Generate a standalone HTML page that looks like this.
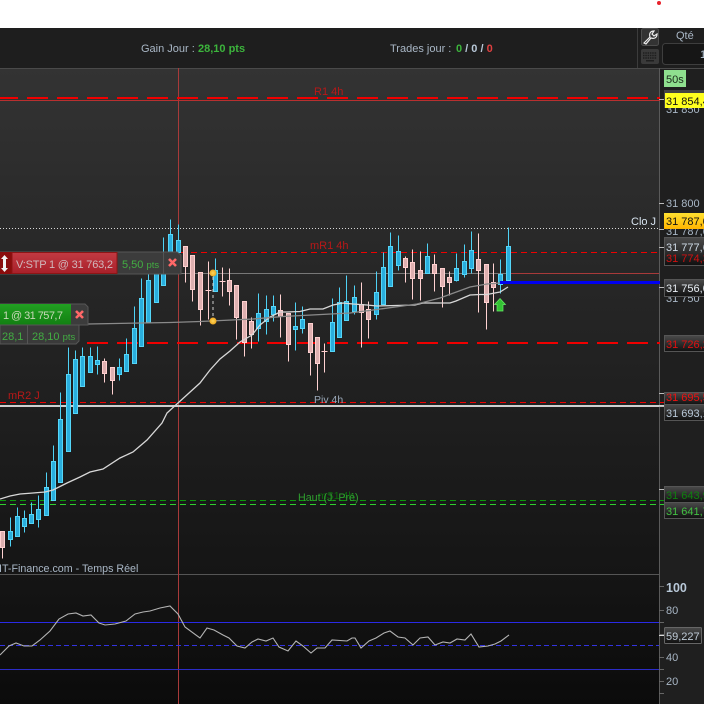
<!DOCTYPE html>
<html><head><meta charset="utf-8"><style>
html,body{margin:0;padding:0;width:704px;height:704px;overflow:hidden;background:#fff}
svg{display:block;font-family:"Liberation Sans",sans-serif}
</style></head><body>
<svg width="704" height="704" viewBox="0 0 704 704" xmlns="http://www.w3.org/2000/svg">
<defs>
<linearGradient id="c" x1="0" y1="0" x2="0" y2="1"><stop offset="0" stop-color="#333"/><stop offset="1" stop-color="#151515"/></linearGradient>
<linearGradient id="r" x1="0" y1="0" x2="0" y2="1"><stop offset="0" stop-color="#151515"/><stop offset="1" stop-color="#0b0b0b"/></linearGradient>
<linearGradient id="b" x1="0" y1="0" x2="0" y2="1"><stop offset="0" stop-color="#4a4a4a"/><stop offset="1" stop-color="#101010"/></linearGradient>
<linearGradient id="y" x1="0" y1="0" x2="0" y2="1"><stop offset="0" stop-color="#ffe030"/><stop offset="1" stop-color="#ffb400"/></linearGradient>
<linearGradient id="l" x1="0" y1="0" x2="0" y2="1"><stop offset="0" stop-color="#c23a42"/><stop offset="1" stop-color="#a8202a"/></linearGradient>
<linearGradient id="g" x1="0" y1="0" x2="0" y2="1"><stop offset="0" stop-color="#22a022"/><stop offset="1" stop-color="#127f12"/></linearGradient>
<radialGradient id="d"><stop offset="0" stop-color="#ffd75a"/><stop offset="1" stop-color="#eda820"/></radialGradient>
</defs>
<rect width="704" height="28" fill="#fff"/>
<circle cx="659" cy="3" r="2" fill="#e8222c"/>
<rect y="28" width="704" height="40" fill="#1e1e1e"/>
<rect y="68" width="660" height="506" fill="url(#c)"/>
<rect x="660" y="68" width="44" height="636" fill="#1f1f1f"/>
<rect y="575" width="659" height="129" fill="url(#r)"/>
<rect y="68" width="704" height="1" fill="#4a4a4a"/>
<rect y="574" width="659" height="1" fill="#555"/>
<rect x="637" y="28" width="1" height="40" fill="#3c3c3c"/>
<rect x="659" y="68" width="1" height="636" fill="#5a5a5a"/>
<rect x="178" y="68" width="1" height="636" fill="#a83a3a"/>

<text x="141" y="52" font-size="11" fill="#a9b7c6">Gain Jour :</text>
<text x="198" y="52" font-size="11" font-weight="bold" fill="#3cb43c">28,10 pts</text>
<text x="390" y="52" font-size="11" fill="#a9b7c6">Trades jour :</text>
<text x="456" y="52" font-size="11" font-weight="bold" fill="#3cb43c">0<tspan fill="#b8c8d8"> / 0 / </tspan><tspan fill="#e04040">0</tspan></text>

<rect x="641.5" y="28.5" width="17" height="17" rx="2" fill="#333" stroke="#4d4d4d"/>
<path d="M644 43l6-6c-1-3 0-6 4-6l-2 3 2 2 3-2c0 4-3 5-6 4l-5 6z" fill="none" stroke="#eee" stroke-width="1.2"/>
<rect x="641" y="49" width="18" height="15" rx="2" fill="#3a3a3a"/>
<path d="M643 53h14M643 55.500h14M643 58h14" stroke="#1e1e1e" stroke-width="1.500" stroke-dasharray="1.500 .8"/>
<rect x="646" y="60" width="8" height="1.500" fill="#1e1e1e"/>
<text x="676" y="39" font-size="11" fill="#a9b7c6">Qté</text>
<rect x="662.500" y="43.500" width="50" height="21" rx="3" fill="#161616" stroke="#3e3e3e"/>
<text x="700" y="58" font-size="11" fill="#b8c8d8">1</text>

<g fill="none">
<rect y="100" width="660" height="1" fill="#b83030"/>
<path d="M-3 98H660" stroke="#f00000" stroke-width="2" stroke-dasharray="21 9"/>
<path d="M0 228.500H660" stroke="#d8d8d8" stroke-dasharray="1 2"/>
<path d="M181 252.500H660" stroke="#f00000" stroke-dasharray="6 4"/>
<path d="M180 273.500H510" stroke="#777"/>
<path d="M510 273.500H659" stroke="#a83a3a"/>
<path d="M87 343H660" stroke="#f00000" stroke-width="2" stroke-dasharray="21 9"/>
<path d="M0 402.500H664" stroke="#f00000" stroke-dasharray="6 4"/>
<rect y="405" width="664" height="2" fill="#cfcfcf"/>
<path d="M0 500.500H664" stroke="#0a9a0a" stroke-dasharray="6 4"/>
<path d="M0 504.500H664" stroke="#2fd02f" stroke-dasharray="6 4"/>
</g>

<text x="314" y="95" font-size="11" fill="#b81818">R1 4h</text>
<text x="310" y="249" font-size="11" fill="#b81818">mR1 4h</text>
<text x="8" y="399" font-size="11" fill="#b81818">mR2 J</text>
<text x="314" y="403" font-size="10.500" fill="#9aa8b8">Piv 4h</text>
<text x="318" y="499" font-size="10.500" fill="#0c6a0c">mS1 4h</text>
<text x="298" y="501" font-size="10.700" fill="#2fa02f">Haut (J. Pré)</text>
<text x="631" y="225" font-size="11" fill="#d8e4f0">Clo J</text>
<text x="-1" y="572" font-size="10.700" fill="#a9b7c6">IT-Finance.com - Temps Réel</text>

<g transform="translate(.5 .5)" fill="none">
<path stroke="#4fd2f5" d="M10 517V546M17 507V536M24 510V532M31 502V523M38 495V527M46 472V515M53 445V500M60 392V482M68 347V451M75 350V413M82 347V386M90 347V372M97 346V374M119 358V380M126 338V371M134 306V363M141 278V346M148 274V322M156 260V302M163 237V285M170 219V272M178 224V252M215 258V291M258 293V341M266 295V334M273 295V321M295 302V350M302 306V333M332 298V351M339 287V337M346 275V320M354 285V314M376 271V319M383 252V304M390 232V286M398 235V270M427 243V273M456 253V281M464 244V277M471 231V273M500 259V293M508 227V280"/>
<path stroke="#ffd2d2" d="M2 531V558M104 358V382M112 367V394M185 246V282M192 255V301M200 272V325M208 261V319M222 267V296M229 268V305M236 285V339M244 301V356M251 317V348M280 294V337M288 313V361M310 323V375M317 337V390M324 343V372M361 282V347M368 301V338M405 256V282M412 249V299M420 251V300M434 254V291M442 268V307M449 271V295M478 233V312M486 264V329M493 263V311"/>
<path fill="#2aaedd" stroke="#55d6f8" d="M8 531h4V539h-4zM15 516h4V536h-4zM22 518h4V526h-4zM29 514h4V523h-4zM36 509h4V519h-4zM44 487h4V515h-4zM51 461h4V500h-4zM58 419h4V482h-4zM66 374h4V451h-4zM73 359h4V413h-4zM80 356h4V386h-4zM88 356h4V372h-4zM95 360h4V364h-4zM117 367h4V374h-4zM124 354h4V371h-4zM132 328h4V363h-4zM139 298h4V346h-4zM146 280h4V322h-4zM154 272h4V302h-4zM161 254h4V285h-4zM168 234h4V270h-4zM176 240h4V252h-4zM213 270h4V291h-4zM256 313h4V328h-4zM264 309h4V321h-4zM271 306h4V314h-4zM293 326h4V329h-4zM300 319h4V328h-4zM330 322h4V351h-4zM337 302h4V337h-4zM344 301h4V320h-4zM352 297h4V311h-4zM374 292h4V314h-4zM381 267h4V304h-4zM388 246h4V286h-4zM396 251h4V265h-4zM425 256h4V273h-4zM454 268h4V280h-4zM462 261h4V274h-4zM469 250h4V268h-4zM498 274h4V284h-4zM506 246h4V280h-4z"/>
<path fill="#deb0b0" stroke="#ffd0d0" d="M0 531h4V547h-4zM102 361h4V373h-4zM110 367h4V380h-4zM183 246h4V266h-4zM190 255h4V289h-4zM198 272h4V309h-4zM205 290h6zM219 281h6zM227 280h4V291h-4zM234 285h4V317h-4zM242 301h4V342h-4zM249 321h4V334h-4zM278 310h4V316h-4zM286 313h4V344h-4zM308 323h4V352h-4zM315 337h4V363h-4zM321 351h6zM359 304h4V312h-4zM366 309h4V319h-4zM403 258h4V267h-4zM410 262h4V278h-4zM418 270h4V278h-4zM432 264h4V273h-4zM440 268h4V286h-4zM447 277h4V282h-4zM476 259h4V270h-4zM484 264h4V302h-4zM491 282h4V287h-4z"/>
</g>

<path fill="none" stroke="#d8d8d8" stroke-width="1.300" d="M0 499L10 496L20 494L33 493L45 492L53 490L67 483L80 477L90 472L103 469L120 458L133 452L147 440L162 423L167 413L178 403L200 383L210 370L220 359L230 351L240 342L252 335L260 325L270 317L280 312L287 312L300 311.500L310 309L323 309L333 305L343 303L353 304L360 304.500L367 305L377 306L415 305L423 303L450 303L456 301L470 295L480 294.500L487 294.500L500 292L508 287"/>
<path fill="none" stroke="#8a8a8a" stroke-width="1.300" d="M88 324L170 322.500L200 321.500L253 319L283 316.500L350 313L373 310L417 304L440 298L470 287L487 284L500 283"/>
<path d="M213 277V318" stroke="#cfcfcf" stroke-dasharray="3 3"/>
<circle cx="213" cy="273" r="3.500" fill="url(#d)"/>
<circle cx="213" cy="321" r="3.500" fill="url(#d)"/>
<rect x="500" y="281" width="160" height="3" fill="#0000f0"/>
<path d="M500 298.500L505.500 304.500H503V311H497V304.500H494.500Z" fill="#33c233" stroke="#66ee66" stroke-width=".7"/>

<!-- Order labels -->
<path d="M0 252H177l4 3V274H0Z" fill="#3c3c3c" stroke="#565656" stroke-width="1"/>
<rect x="0" y="252" width="12" height="22" fill="#8a0c0c"/>
<rect x="12" y="252.500" width="105" height="21" fill="url(#l)" stroke="#8c1515"/>
<rect x="163" y="252" width="1" height="22" fill="#555"/>
<path d="M4.500 255L8 259H6V268H8L4.500 272L1 268H3V259H1Z" fill="#f2f2f2"/>
<text x="16" y="268" font-size="11" fill="#d0b8bc" textLength="97">V:STP 1 @ 31 763,2</text>
<text x="122" y="268" font-size="11" fill="#42ad42">5,50 <tspan font-size="9.500">pts</tspan></text>
<path d="M169 259l7 7m0-7l-7 7" stroke="#ff6868" stroke-width="2.600"/>

<path d="M0 304H85l3 3V325H0Z" fill="#3c3c3c" stroke="#565656"/>
<rect x="0" y="304" width="71" height="21" fill="url(#g)"/>
<text x="3" y="319" font-size="11" fill="#c8d8b8" textLength="60">1 @ 31 757,7</text>
<path d="M76 311l7 7m0-7l-7 7" stroke="#ff6868" stroke-width="2.600"/>
<path d="M0 325H79V341l-3 3H0Z" fill="#3a3a3a" stroke="#565656"/>
<rect x="27" y="325" width="1" height="19" fill="#555"/>
<text x="2" y="340" font-size="11" fill="#42ad42">28,1</text>
<text x="32" y="340" font-size="11" fill="#42ad42">28,10 <tspan font-size="9.500">pts</tspan></text>

<!-- Axis -->
<path d="M659 99.500h5M659 203.500h5M659 229.500h5M659 247.500h5M659 287.500h5M659 393.500h5M659 406.500h5M659 489.500h5" stroke="#bbb"/>
<rect x="664" y="70" width="22" height="17" fill="#8fe08f"/>
<text x="666" y="83" font-size="11" fill="#1a2a1a">50s</text>
<g font-size="11" fill="#a9b7c6">
<text x="666" y="113">31 850</text>
<text x="666" y="207">31 800</text>
<text x="666" y="235">31 787,0</text>
<text x="666" y="302">31 750</text>
<text x="666" y="494" fill="#8898a8">31 650</text>
</g>
<rect x="664" y="90" width="41" height="18" fill="#444"/>
<rect x="665" y="93" width="40" height="15" fill="#ffff1e"/>
<text x="666" y="105" font-size="11" fill="#111">31 854,4</text>
<rect x="664" y="213" width="41" height="16" fill="url(#y)"/>
<text x="666" y="225" font-size="11" fill="#111">31 787,0</text>

<rect x="664.500" y="237.500" width="42" height="28" fill="url(#b)" stroke="#555"/>
<text x="666" y="251" font-size="11" fill="#d0dce8">31 777,6</text>
<text x="666" y="262" font-size="11" fill="#d01010">31 774,3</text>
<rect x="664.500" y="279.500" width="42" height="17" fill="url(#b)" stroke="#555"/>
<text x="666" y="292" font-size="11" fill="#e8eef4">31 756,0</text>
<rect x="664.500" y="335.500" width="42" height="16" fill="url(#b)" stroke="#555"/>
<text x="666" y="348" font-size="11" fill="#e01010">31 726,2</text>
<rect x="664.500" y="392.500" width="42" height="12" fill="url(#b)" stroke="#555"/>
<text x="666" y="401" font-size="11" fill="#f01010">31 695,5</text>
<rect x="664.500" y="404.500" width="42" height="16" fill="url(#b)" stroke="#555"/>
<text x="666" y="417" font-size="11" fill="#b8c8d8">31 693,1</text>
<rect x="664.500" y="486.500" width="42" height="16" fill="url(#b)" stroke="#555"/>
<text x="666" y="499" font-size="11" fill="#0f800f">31 643,9</text>
<rect x="664.500" y="502.500" width="42" height="16" fill="url(#b)" stroke="#555"/>
<text x="666" y="515" font-size="11" fill="#42c042">31 641,7</text>

<!-- Indicator -->
<rect y="622" width="659" height="1" fill="#2a2ae6"/>
<path d="M0 645.500H659" stroke="#3333e0" stroke-dasharray="5 3"/>
<rect y="669" width="659" height="1" fill="#2c2cc8"/>
<polyline fill="none" stroke="#b4b4b4" stroke-width="1.100" points="0,655 9,646 16,643 24,646 32,646 40,640 50,631 59,619 68,614 76,613 83,616 91,615 99,623 105,625 115,624 126,621 135,614 143,612 150,611 160,608 170,606 178,614 185,627 200,638 207,628 214,630 223,635 229,638 237,646 245,648 252,642 258,639 266,641 273,638 279,647 288,651 296,641 303,646 311,653 317,648 325,648 332,640 347,641 352,638 355,638 361,648 369,641 376,638 384,633 390,631 398,637 405,638 413,645 420,638 428,637 435,645 443,642 450,643 457,639 465,640 471,634 479,647 488,646 495,644 501,641 509,635"/>
<path d="M659 586.500h5M659 610.500h5M659 622.500h5M659 634.500h5M659 657.500h5M659 669.500h5M659 681.500h5M659 693.500h5" stroke="#666"/>
<rect x="659" y="635" width="5" height="1" fill="#ddd"/>
<text x="666" y="592" font-size="12.500" font-weight="bold" fill="#b8c8d8">100</text>
<text x="666" y="614" font-size="11" fill="#a9b7c6">80</text>
<rect x="664.500" y="627.500" width="37" height="16" rx="1" fill="url(#b)" stroke="#666"/>
<text x="666" y="640" font-size="11" fill="#c0ccd8">59,227</text>
<text x="666" y="661" font-size="11" fill="#a9b7c6">40</text>
<text x="666" y="685" font-size="11" fill="#a9b7c6">20</text>
</svg>
</body></html>
